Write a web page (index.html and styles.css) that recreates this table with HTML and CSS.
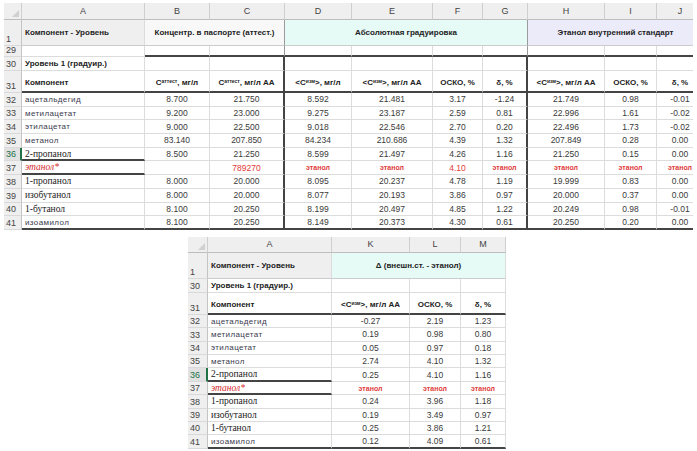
FILE: index.html
```html
<!DOCTYPE html>
<html lang="ru">
<head>
<meta charset="utf-8">
<title>Уровень 1</title>
<link rel="stylesheet" href="styles.css">
</head>
<body>
<div class="page">
  <div class="clip">
    <div class="sheet top">
      <!-- column headers -->
      <div class="ch corner"><span class="tri"></span></div>
      <div class="ch">A</div><div class="ch">B</div><div class="ch">C</div><div class="ch">D</div><div class="ch">E</div><div class="ch">F</div><div class="ch">G</div><div class="ch">H</div><div class="ch">I</div><div class="ch">J</div>
      <!-- row 1 -->
      <div class="rh">1</div>
      <div class="c h1 grey b">Компонент - Уровень</div>
      <div class="c h1 light b ctr s2 sepr">Концентр. в паспорте (аттест.)</div>
      <div class="c h1 cyan b ctr s4 sepr">Абсолютная градуировка</div>
      <div class="c h1 lav b ctr s3">Этанол внутренний стандарт</div>
      <!-- row 29 -->
      <div class="rh">29</div>
      <div class="c"></div><div class="c tb"></div><div class="c tb sepr"></div><div class="c tb"></div><div class="c tb"></div><div class="c tb"></div><div class="c tb sepr"></div><div class="c tb"></div><div class="c tb"></div><div class="c tb"></div>
      <!-- row 30 -->
      <div class="rh">30</div>
      <div class="c b">Уровень 1 (градуир.)</div><div class="c"></div><div class="c tr"></div><div class="c"></div><div class="c"></div><div class="c"></div><div class="c tr"></div><div class="c"></div><div class="c"></div><div class="c"></div>
      <!-- row 31 -->
      <div class="rh">31</div>
      <div class="c hd b tb">Компонент</div>
      <div class="c hd b ctr tb">C<span class="sup">аттест</span>, мг/л</div>
      <div class="c hd b ctr tb tr">C<span class="sup">аттест</span>, мг/л АА</div>
      <div class="c hd b ctr tb">&lt;C<span class="sup">изм</span>&gt;, мг/л</div>
      <div class="c hd b ctr tb">&lt;C<span class="sup">изм</span>&gt;, мг/л АА</div>
      <div class="c hd b ctr tb">ОСКО, %</div>
      <div class="c hd b ctr tb tr">δ, %</div>
      <div class="c hd b ctr tb">&lt;C<span class="sup">изм</span>&gt;, мг/л АА</div>
      <div class="c hd b ctr tb">ОСКО, %</div>
      <div class="c hd b ctr tb">δ, %</div>
      <!-- 32 -->
      <div class="rh">32</div>
      <div class="c ns">ацетальдегид</div><div class="c n">8.700</div><div class="c n tr">21.750</div><div class="c n">8.592</div><div class="c n">21.481</div><div class="c n">3.17</div><div class="c n tr">-1.24</div><div class="c n">21.749</div><div class="c n">0.98</div><div class="c n">-0.01</div>
      <!-- 33 -->
      <div class="rh">33</div>
      <div class="c ns">метилацетат</div><div class="c n">9.200</div><div class="c n tr">23.000</div><div class="c n">9.275</div><div class="c n">23.187</div><div class="c n">2.59</div><div class="c n tr">0.81</div><div class="c n">22.996</div><div class="c n">1.61</div><div class="c n">-0.02</div>
      <!-- 34 -->
      <div class="rh">34</div>
      <div class="c ns">этилацетат</div><div class="c n">9.000</div><div class="c n tr">22.500</div><div class="c n">9.018</div><div class="c n">22.546</div><div class="c n">2.70</div><div class="c n tr">0.20</div><div class="c n">22.496</div><div class="c n">1.73</div><div class="c n">-0.02</div>
      <!-- 35 -->
      <div class="rh">35</div>
      <div class="c ns">метанол</div><div class="c n">83.140</div><div class="c n tr">207.850</div><div class="c n">84.234</div><div class="c n">210.686</div><div class="c n">4.39</div><div class="c n tr">1.32</div><div class="c n">207.849</div><div class="c n">0.28</div><div class="c n">0.00</div>
      <!-- 36 -->
      <div class="rh sel">36</div>
      <div class="c sf tb">2-пропанол</div><div class="c n">8.500</div><div class="c n tr">21.250</div><div class="c n">8.599</div><div class="c n">21.497</div><div class="c n">4.26</div><div class="c n tr">1.16</div><div class="c n">21.250</div><div class="c n">0.15</div><div class="c n">0.00</div>
      <!-- 37 -->
      <div class="rh">37</div>
      <div class="c et tb">этанол*</div><div class="c n"></div><div class="c n red tr">789270</div><div class="c rw">этанол</div><div class="c rw">этанол</div><div class="c n red">4.10</div><div class="c rw tr">этанол</div><div class="c rw">этанол</div><div class="c rw">этанол</div><div class="c rw">этанол</div>
      <!-- 38 -->
      <div class="rh">38</div>
      <div class="c sf">1-пропанол</div><div class="c n">8.000</div><div class="c n tr">20.000</div><div class="c n">8.095</div><div class="c n">20.237</div><div class="c n">4.78</div><div class="c n tr">1.19</div><div class="c n">19.999</div><div class="c n">0.83</div><div class="c n">0.00</div>
      <!-- 39 -->
      <div class="rh">39</div>
      <div class="c sf">изобутанол</div><div class="c n">8.000</div><div class="c n tr">20.000</div><div class="c n">8.077</div><div class="c n">20.193</div><div class="c n">3.86</div><div class="c n tr">0.97</div><div class="c n">20.000</div><div class="c n">0.37</div><div class="c n">0.00</div>
      <!-- 40 -->
      <div class="rh">40</div>
      <div class="c sf">1-бутанол</div><div class="c n">8.100</div><div class="c n tr">20.250</div><div class="c n">8.199</div><div class="c n">20.497</div><div class="c n">4.85</div><div class="c n tr">1.22</div><div class="c n">20.249</div><div class="c n">0.98</div><div class="c n">-0.01</div>
      <!-- 41 -->
      <div class="rh">41</div>
      <div class="c ns tb">изоамилол</div><div class="c n tb">8.100</div><div class="c n tb tr">20.250</div><div class="c n tb">8.149</div><div class="c n tb">20.373</div><div class="c n tb">4.30</div><div class="c n tb tr">0.61</div><div class="c n tb">20.250</div><div class="c n tb">0.20</div><div class="c n tb">0.00</div>
    </div>
  </div>

  <div class="sheet bottom">
    <div class="ch corner"><span class="tri"></span></div>
    <div class="ch">A</div><div class="ch">K</div><div class="ch">L</div><div class="ch">M</div>
    <!-- row 1 -->
    <div class="rh">1</div>
    <div class="c h1 grey b">Компонент - Уровень</div>
    <div class="c h1 cyan b ctr s3">Δ (внешн.ст. - этанол)</div>
    <!-- row 30 -->
    <div class="rh">30</div>
    <div class="c b">Уровень 1 (градуир.)</div><div class="c"></div><div class="c"></div><div class="c"></div>
    <!-- row 31 -->
    <div class="rh">31</div>
    <div class="c hd b tb">Компонент</div>
    <div class="c hd b ctr tb">&lt;C<span class="sup">изм</span>&gt;, мг/л АА</div>
    <div class="c hd b ctr tb">ОСКО, %</div>
    <div class="c hd b ctr tb">δ, %</div>
    <div class="rh">32</div>
    <div class="c ns">ацетальдегид</div><div class="c n">-0.27</div><div class="c n">2.19</div><div class="c n">1.23</div>
    <div class="rh">33</div>
    <div class="c ns">метилацетат</div><div class="c n">0.19</div><div class="c n">0.98</div><div class="c n">0.80</div>
    <div class="rh">34</div>
    <div class="c ns">этилацетат</div><div class="c n">0.05</div><div class="c n">0.97</div><div class="c n">0.18</div>
    <div class="rh">35</div>
    <div class="c ns">метанол</div><div class="c n">2.74</div><div class="c n">4.10</div><div class="c n">1.32</div>
    <div class="rh sel">36</div>
    <div class="c sf tb">2-пропанол</div><div class="c n">0.25</div><div class="c n">4.10</div><div class="c n">1.16</div>
    <div class="rh">37</div>
    <div class="c et tb">этанол*</div><div class="c rw">этанол</div><div class="c rw">этанол</div><div class="c rw">этанол</div>
    <div class="rh">38</div>
    <div class="c sf">1-пропанол</div><div class="c n">0.24</div><div class="c n">3.96</div><div class="c n">1.18</div>
    <div class="rh">39</div>
    <div class="c sf">изобутанол</div><div class="c n">0.19</div><div class="c n">3.49</div><div class="c n">0.97</div>
    <div class="rh">40</div>
    <div class="c sf">1-бутанол</div><div class="c n">0.25</div><div class="c n">3.86</div><div class="c n">1.21</div>
    <div class="rh">41</div>
    <div class="c ns tb">изоамилол</div><div class="c n tb">0.12</div><div class="c n tb">4.09</div><div class="c n tb">0.61</div>
  </div>
</div>
</body>
</html>
```

FILE: styles.css
```css
* { box-sizing: border-box; }
html, body { margin: 0; padding: 0; background: #ffffff; }
body { font-family: "Liberation Sans", Arial, sans-serif; color: #333333; }

.page {
  display: flex;
  flex-direction: column;
  align-items: flex-start;
  padding: 3px 0 0 4px;
}

.clip {
  width: 689px;
  overflow: hidden;
}

.sheet {
  display: grid;
}

.top {
  width: 700px;
  grid-template-columns: 18px 123px 65px 75px 67px 81px 50px 45px 77px 52px 47px;
  grid-template-rows: 17px 26px 11px 14px 22px repeat(10, 13.7px);
}

.bottom {
  margin: 7px 0 0 184px;
  grid-template-columns: 20px 124px 78px 51px 45px;
  grid-template-rows: 16px 26px 14px 22px repeat(10, 13.4px);
}

/* column header */
.ch {
  background: #efefef;
  border-right: 1px solid #cfcfcf;
  border-bottom: 1px solid #bdbdbd;
  font-size: 9px;
  color: #444444;
  display: flex;
  align-items: center;
  justify-content: center;
}
.corner {
  justify-content: flex-end;
  align-items: flex-end;
  padding: 0 2px 2px 0;
}
.tri {
  width: 0;
  height: 0;
  border-left: 7px solid transparent;
  border-bottom: 7px solid #d0d0d0;
}

/* row header */
.rh {
  background: #efefef;
  border-right: 1px solid #c4c4c4;
  border-bottom: 1px solid #d9d9d9;
  font-size: 9px;
  color: #444444;
  display: flex;
  align-items: flex-end;
  padding: 0 0 1px 2px;
  line-height: 10px;
}
.rh.sel {
  background: #e1e1e1;
  color: #217346;
  border-right: 2px solid #217346;
}

/* cells */
.c {
  border-right: 1px solid #dcdcdc;
  border-bottom: 1px solid #dcdcdc;
  display: flex;
  align-items: center;
  padding: 0 3px;
  font-size: 8px;
  white-space: nowrap;
  overflow: hidden;
  min-width: 0;
}
.b { font-weight: bold; color: #222222; }
.ctr { justify-content: center; }
.hd { align-items: flex-end; padding-bottom: 4px; }
.h1 { border-bottom-color: #cccccc; }
.s2 { grid-column: span 2; }
.s3 { grid-column: span 3; }
.s4 { grid-column: span 4; }

.grey { background: #efefef; }
.light { background: #f8f8f8; }
.cyan { background: #e6faf6; }
.lav { background: #ecebfa; }
.sepr { border-right: 1px solid #9a9a9a; }

.tb { border-bottom: 2px solid #444444; }
.tr { border-right: 2px solid #444444; }

.sup {
  font-size: 5px;
  position: relative;
  top: -3px;
}

.n {
  justify-content: center;
  font-size: 8.5px;
  color: #3a3a3a;
}
.red { color: #e03a3a; }
.rw {
  justify-content: center;
  font-size: 7px;
  font-weight: bold;
  color: #e03a3a;
}

.ns {
  font-size: 8px;
  letter-spacing: 0.4px;
  color: #3a3a4e;
}
.sf {
  font-family: "Liberation Serif", "Times New Roman", serif;
  font-size: 9.5px;
  color: #222222;
}
.et {
  font-family: "Liberation Serif", "Times New Roman", serif;
  font-style: italic;
  font-size: 9.5px;
  color: #d42c2c;
}
```
